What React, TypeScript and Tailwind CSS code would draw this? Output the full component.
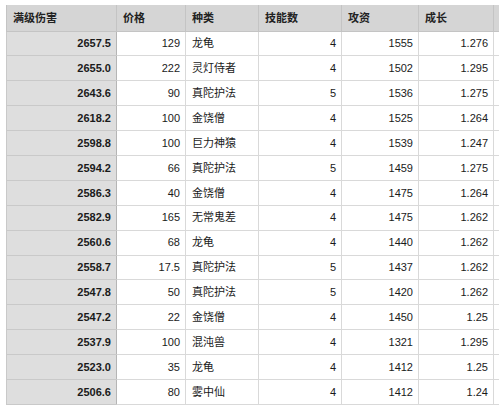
const headers = ['满级伤害', '价格', '种类', '技能数', '攻资', '成长'];

const rows: [string, string, string, string, string, string][] = [
  ['2657.5', '129', '龙龟', '4', '1555', '1.276'],
  ['2655.0', '222', '灵灯侍者', '4', '1502', '1.295'],
  ['2643.6', '90', '真陀护法', '5', '1536', '1.275'],
  ['2618.2', '100', '金饶僧', '4', '1525', '1.264'],
  ['2598.8', '100', '巨力神猿', '4', '1539', '1.247'],
  ['2594.2', '66', '真陀护法', '5', '1459', '1.275'],
  ['2586.3', '40', '金饶僧', '4', '1475', '1.264'],
  ['2582.9', '165', '无常鬼差', '4', '1475', '1.262'],
  ['2560.6', '68', '龙龟', '4', '1440', '1.262'],
  ['2558.7', '17.5', '真陀护法', '5', '1437', '1.262'],
  ['2547.8', '50', '真陀护法', '5', '1420', '1.262'],
  ['2547.2', '22', '金饶僧', '4', '1450', '1.25'],
  ['2537.9', '100', '混沌兽', '4', '1321', '1.295'],
  ['2523.0', '35', '龙龟', '4', '1412', '1.25'],
  ['2506.6', '80', '雾中仙', '4', '1412', '1.24'],
];

const widths = ['w-[110px]', 'w-[69px]', 'w-[73px]', 'w-[83px]', 'w-[77px]', 'w-[75px]', 'w-[40px]'];

export default function App() {
  return (
    <div className="w-[499px] h-[412px] overflow-hidden bg-white pl-[6px] pt-[5px] font-['Liberation_Sans','Noto_Sans_CJK_SC',sans-serif] text-[11px] text-[#1a1a1a]">
      <table className="table-fixed border-collapse w-[527px]">
        <colgroup>
          {widths.map((w, i) => (
            <col key={i} className={w} />
          ))}
        </colgroup>
        <thead>
          <tr className="h-[26px] bg-[#d5d5d5]">
            {headers.map((h) => (
              <th
                key={h}
                className="border border-[#c4c4c4] border-t-0 px-[6px] text-left font-bold text-[#222]"
              >
                {h}
              </th>
            ))}
            <th className="border border-[#c4c4c4] border-t-0 border-r-0" />
          </tr>
        </thead>
        <tbody>
          {rows.map((r, i) => (
            <tr key={i} className="h-[24.9px]">
              <td className="border border-[#c9c9c9] border-r-[#b5b5b5] bg-[#dedede] pr-[5px] text-right font-bold">
                {r[0]}
              </td>
              <td className="border border-[#d9d9d9] pr-[5px] text-right">{r[1]}</td>
              <td className="border border-[#d9d9d9] pl-[6px] text-left">{r[2]}</td>
              <td className="border border-[#d9d9d9] pr-[5px] text-right">{r[3]}</td>
              <td className="border border-[#d9d9d9] pr-[5px] text-right">{r[4]}</td>
              <td className="border border-[#d9d9d9] pr-[5px] text-right">{r[5]}</td>
              <td className="border border-[#d9d9d9] border-r-0" />
            </tr>
          ))}
        </tbody>
      </table>
    </div>
  );
}
